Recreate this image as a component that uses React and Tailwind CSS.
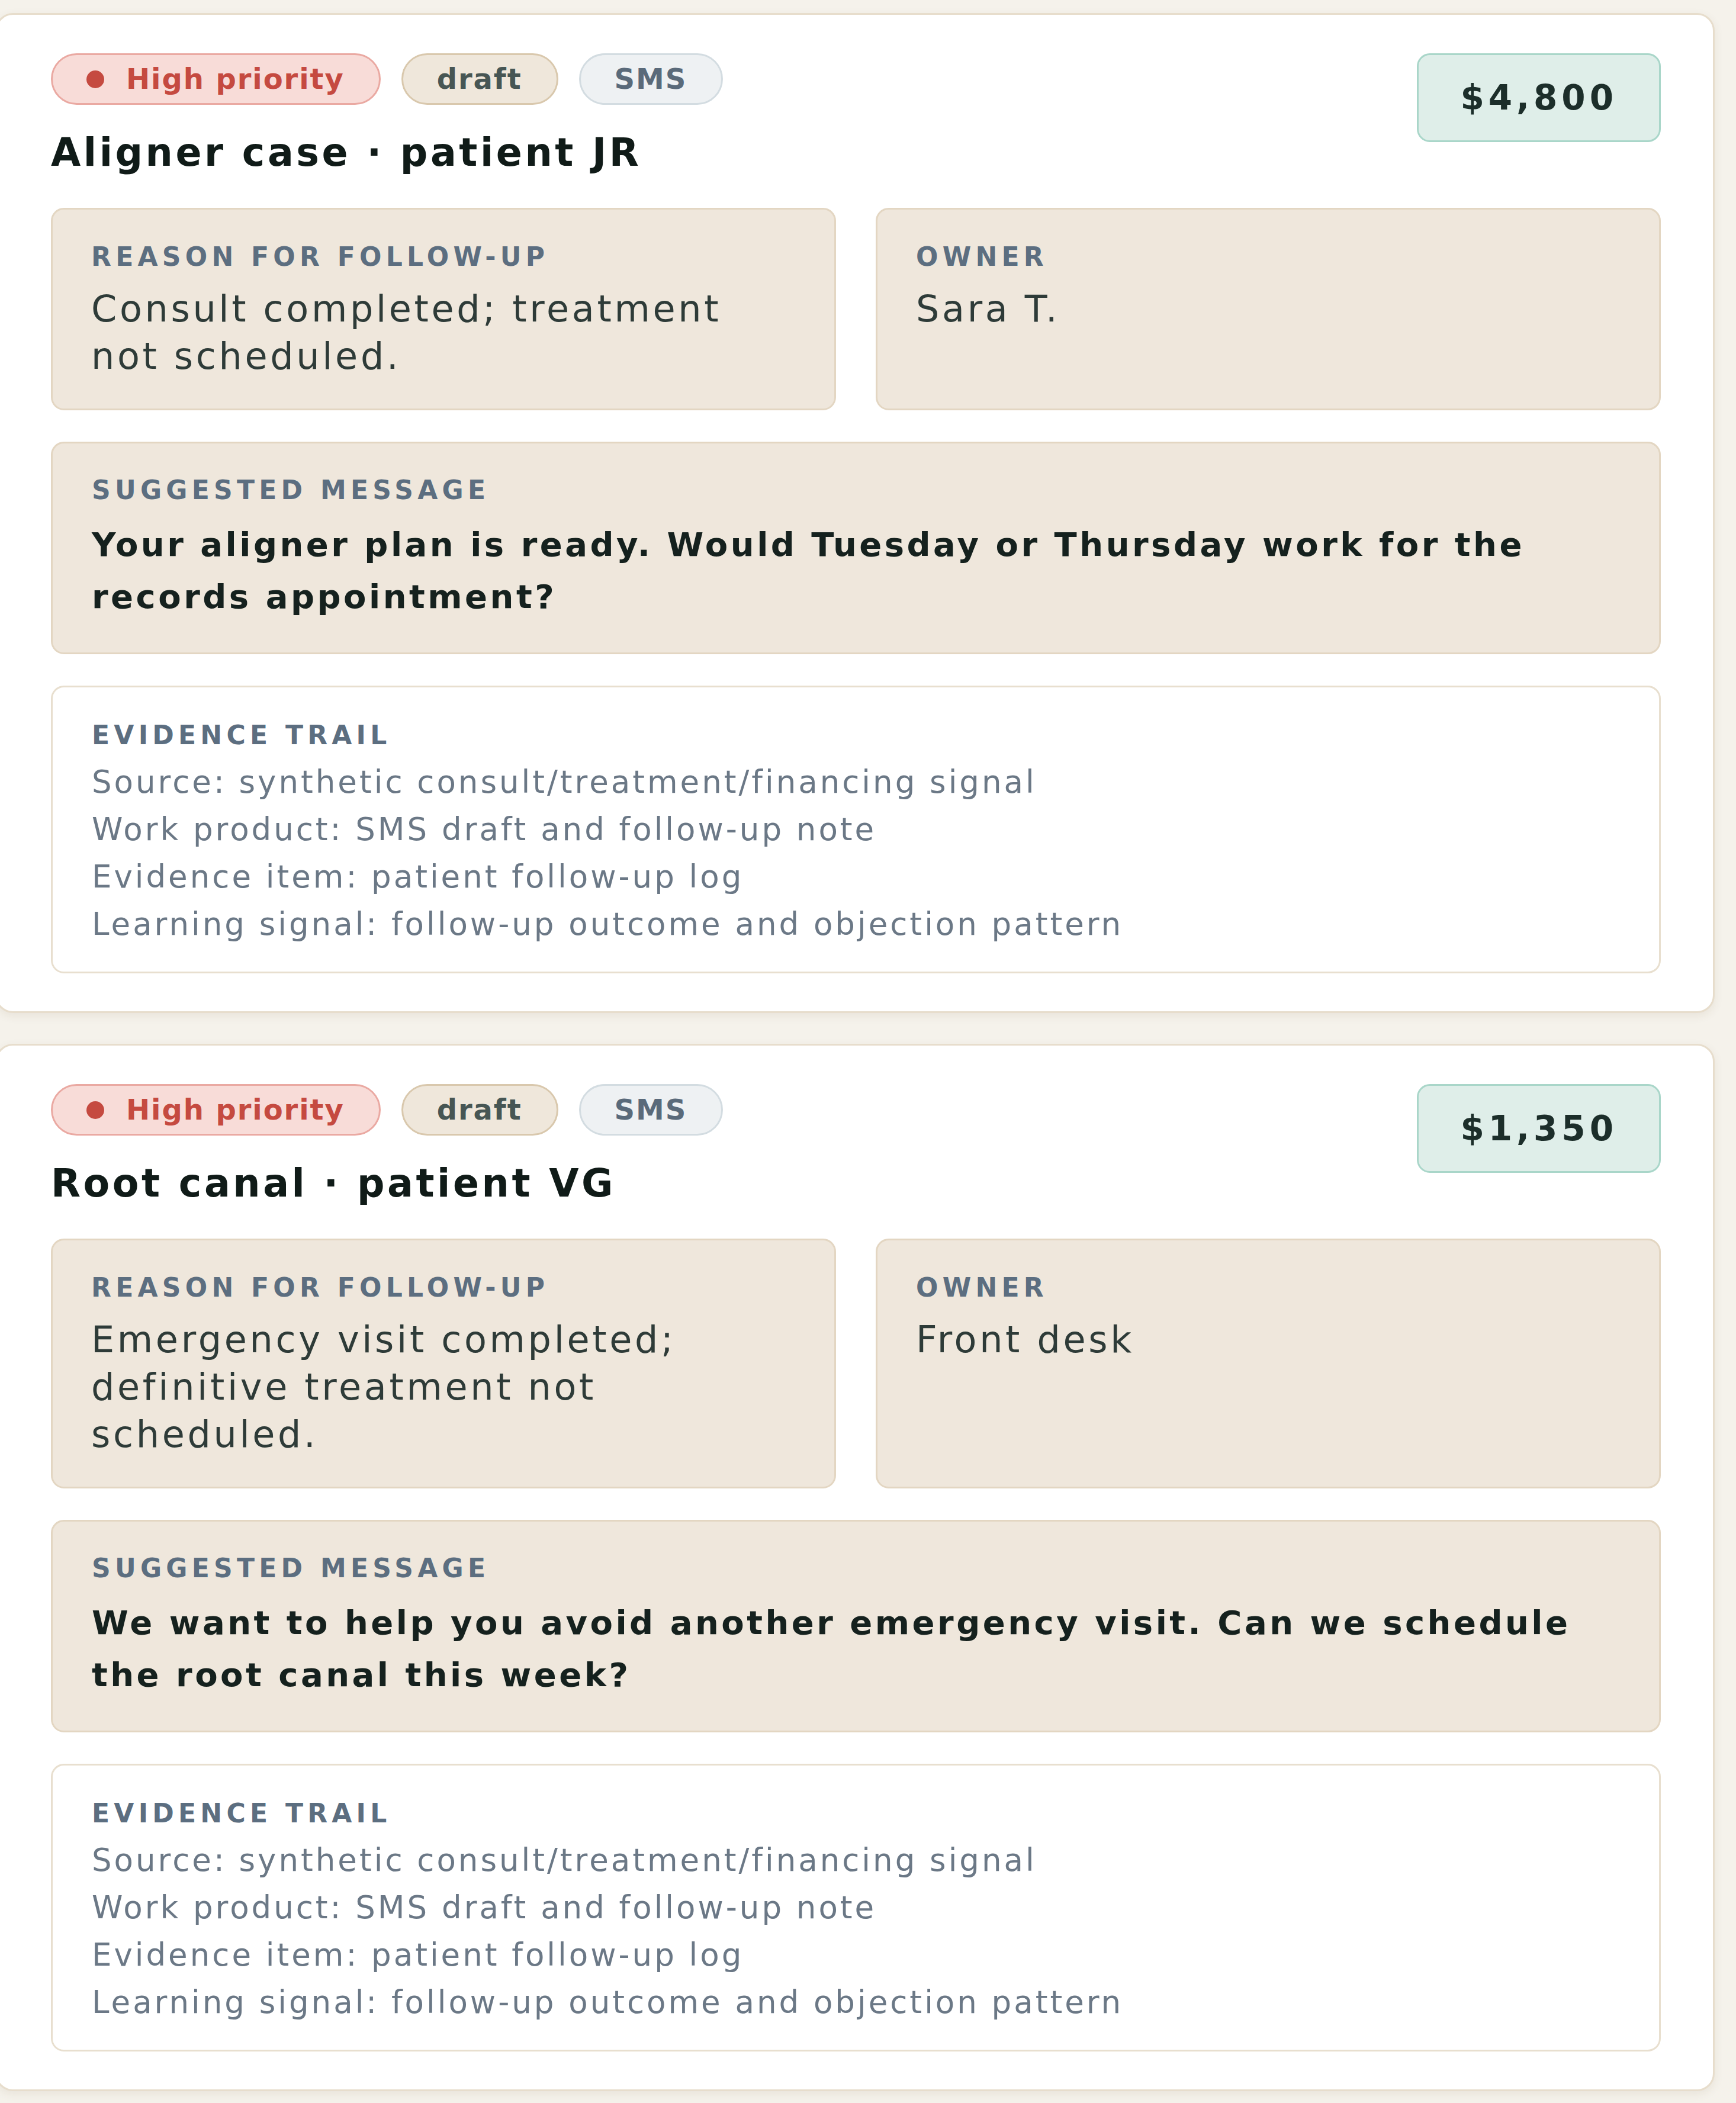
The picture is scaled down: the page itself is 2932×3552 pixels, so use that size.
import React from "react";

const cases = [
  {
    amount: "$4,800",
    title: "Aligner case · patient JR",
    reason: "Consult completed; treatment not scheduled.",
    owner: "Sara T.",
    message:
      "Your aligner plan is ready. Would Tuesday or Thursday work for the records appointment?",
  },
  {
    amount: "$1,350",
    title: "Root canal · patient VG",
    reason: "Emergency visit completed; definitive treatment not scheduled.",
    owner: "Front desk",
    message:
      "We want to help you avoid another emergency visit. Can we schedule the root canal this week?",
  },
];

const evidence = [
  "Source: synthetic consult/treatment/financing signal",
  "Work product: SMS draft and follow-up note",
  "Evidence item: patient follow-up log",
  "Learning signal: follow-up outcome and objection pattern",
];

function Label({ children }) {
  return (
    <div className="text-[44px] font-bold leading-[56px] tracking-[0.165em] uppercase text-[#5c6e80]">
      {children}
    </div>
  );
}

function Chip({ children, className }) {
  return (
    <span
      className={
        "flex items-center rounded-full border-[3px] pl-[57px] pr-[58px] py-[12px] text-[48px] font-bold leading-[57px] tracking-[0.04em] " +
        className
      }
    >
      {children}
    </span>
  );
}

function CaseCard({ data }) {
  return (
    <div className="-ml-[8px] flex flex-col gap-[53px] rounded-[30px] border-[3px] border-[#e7ddcc] bg-white pt-[65px] pb-[64px] pl-[91px] pr-[88px] shadow-[0_5px_16px_rgba(90,70,30,0.08)]">
      <div className="flex items-start justify-between">
        <div className="flex flex-col">
          <div className="flex items-center gap-[35px]">
            <Chip className="border-[#eaa9a2] bg-[#f8dcd8] text-[#c54a40]">
              <span className="mr-[37px] h-[30px] w-[30px] rounded-full bg-[#c54a40]" />
              High priority
            </Chip>
            <Chip className="border-[#d9c8ad] bg-[#efe7db] text-[#475654]">draft</Chip>
            <Chip className="border-[#d3dce1] bg-[#eef1f3] px-[66px] text-[#5a6a7a]">SMS</Chip>
          </div>
          <h2 className="mt-[40px] text-[65px] font-bold leading-[81px] tracking-[0.07em] text-[#101b18]">
            {data.title}
          </h2>
        </div>
        <div className="rounded-[22px] border-[3px] border-[#a9d6c9] bg-[#dfeee9] px-[70px] py-[36px] text-[58px] font-bold leading-[72px] tracking-[0.12em] text-[#1c2e2a]">
          {data.amount}
        </div>
      </div>

      <div className="grid grid-cols-2 gap-[67px]">
        <div className="rounded-[22px] border-[3px] border-[#e3d6c2] bg-[#efe7dc] pt-[52px] pb-[48px] pl-[65px] pr-[65px]">
          <Label>Reason for follow-up</Label>
          <div className="mt-[20px] text-[62px] leading-[80px] tracking-[0.075em] text-[#2e3b38]">
            {data.reason}
          </div>
        </div>
        <div className="rounded-[22px] border-[3px] border-[#e3d6c2] bg-[#efe7dc] pt-[52px] pb-[48px] pl-[65px] pr-[65px]">
          <Label>Owner</Label>
          <div className="mt-[20px] text-[62px] leading-[80px] tracking-[0.075em] text-[#2e3b38]">
            {data.owner}
          </div>
        </div>
      </div>

      <div className="rounded-[22px] border-[3px] border-[#e3d6c2] bg-[#efe7dc] pt-[51px] pb-[50px] pl-[66px] pr-[66px]">
        <Label>Suggested message</Label>
        <div className="mt-[20px] text-[56px] font-bold leading-[88px] tracking-[0.08em] text-[#15211e]">
          {data.message}
        </div>
      </div>

      <div className="rounded-[22px] border-[3px] border-[#e8dfcf] bg-white pt-[53px] pb-[40px] pl-[66px] pr-[66px]">
        <Label>Evidence trail</Label>
        <div className="mt-[11px] flex flex-col">
          {evidence.map((line) => (
            <div
              key={line}
              className="text-[53px] leading-[80px] tracking-[0.075em] text-[#6b7886]"
            >
              {line}
            </div>
          ))}
        </div>
      </div>
    </div>
  );
}

export default function App() {
  return (
    <div className="min-h-screen overflow-hidden bg-[#f5f2eb] pt-[22px] pr-[36px] pb-[12px] font-['DejaVu_Sans',sans-serif]">
      <div className="flex flex-col gap-[52px]">
        {cases.map((c) => (
          <CaseCard key={c.title} data={c} />
        ))}
      </div>
    </div>
  );
}
